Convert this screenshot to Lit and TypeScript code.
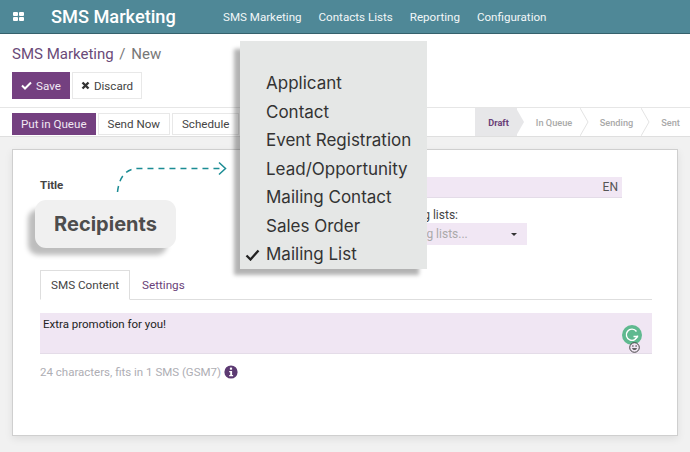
import { LitElement, html, css } from "lit";
import { customElement } from "lit/decorators.js";

@customElement("app-root")
export class AppRoot extends LitElement {
  static styles = css`
    :host { display: block; position: relative; width: 690px; height: 452px; overflow: hidden; background: #fff; font-family: Roboto, "Liberation Sans", sans-serif; color: #4c4c4c; font-size: 12px; }
    .nav { height: 33px; background: #4f8897; border-bottom: 1px solid #35616c; display: flex; align-items: center; color: #fff; box-sizing: content-box; }
    .apps { margin-left: 13px; width: 11px; height: 10px; display: grid; grid-template-columns: 5px 5px; grid-template-rows: 4px 4px; gap: 1px; align-content: center; }
    .apps i { background: #fff; border-radius: 1px; }
    .brand { margin-left: 27px; font-size: 18.2px; font-weight: 500; width: 172px; }
    .menu-items { display: flex; gap: 17px; font-size: 11.6px; color: #f2f7f8; }
    .panel { height: 74px; box-sizing: border-box; padding: 11px 12px 0; border-bottom: 1px solid #e6e6e6; }
    .crumbs { font-size: 15px; line-height: 18px; color: #6a4a78; }
    .crumbs span { color: #777; }
    .crumbs .sep { margin: 0 2px; }
    .actions { display: flex; gap: 2px; margin-top: 9px; }
    .btn { display: flex; align-items: center; justify-content: center; gap: 4px; box-sizing: border-box; font-size: 11.6px; border: 1px solid #e8e8e8; background: #fff; color: #444; }
    .primary { background: #744080; border-color: #744080; color: #f1e8f3; }
    .save { width: 58px; height: 27px; }
    .discard { width: 70px; height: 27px; }
    .status { height: 29px; box-sizing: border-box; display: flex; justify-content: space-between; align-items: center; padding-left: 12px; border-bottom: 1px solid #dfdfdf; }
    .left { display: flex; gap: 2px; padding-top: 3px; }
    .left .btn { height: 22px; padding: 0 8px; }
    .left .btn.plain { padding: 0 9px; }
    .left .btn.blank { width: 40px; }
    .steps { display: flex; height: 100%; font-size: 9.2px; font-weight: 500; color: #a9a9a9; width: 215px; }
    .step { position: relative; display: flex; align-items: center; justify-content: center; height: 100%; }
    .step svg { position: absolute; right: -8px; top: 0; width: 9px; height: 28px; z-index: 1; }
    .draft { width: 42px; background: #e7e7e9; color: #6a3f78; font-weight: 700; padding-left: 5px; box-sizing: border-box; }
    .queue { width: 64px; padding-left: 10px; box-sizing: border-box; }
    .sending { width: 61px; padding-left: 10px; box-sizing: border-box; }
    .sent { width: 48px; padding-left: 9px; box-sizing: border-box; }
    .content { height: 315px; box-sizing: border-box; padding: 12px 12px 0; background: #f1f1f1; }
    .sheet { height: 287px; box-sizing: border-box; background: #fff; border: 1px solid #cfcfcf; box-shadow: 0 3px 8px rgba(0,0,0,.08); padding: 27px 25px 0 27px; }
    .row { display: flex; align-items: center; height: 21px; }
    .title-label { width: 100px; font-weight: 700; font-size: 11.5px; color: #444; padding-bottom: 5px; }
    .title-input { margin-left: 200px; width: 282px; flex: none; height: 21px; box-sizing: border-box; background: #f1e7f4; border-bottom: 1px solid #e4dce8; display: flex; justify-content: flex-end; align-items: center; padding-right: 4px; color: #555; font-size: 12px; }
    .lists { margin-left: 280px; height: 46px; margin-top: 9px; width: 207px; }
    .lists .cap { display: block; height: 16px; line-height: 16px; font-size: 12px; text-align: right; padding-right: 69px; color: #444; }
    .select { height: 22px; background: #f1e7f4; color: #aaa; display: flex; align-items: center; justify-content: space-between; padding: 0 10px 0 38px; font-size: 12px; }
    .select i { width: 0; height: 0; border: 3px solid transparent; border-top: 3.5px solid #333; border-bottom: 0; }
    .tabs { display: flex; margin-top: 17px; height: 30px; box-sizing: border-box; border-bottom: 1px solid #dedede; }
    .tab { box-sizing: border-box; height: 30px; display: flex; align-items: center; padding: 0 12px; font-size: 11.7px; color: #6a3f78; }
    .tab.active { width: 90px; justify-content: center; padding: 0; background: #fff; color: #444; border: 1px solid #dedede; border-bottom: 1px solid #fff; }
    .area { position: relative; height: 41px; margin-top: 13px; box-sizing: border-box; background: #f0e6f3; border-bottom: 1px solid #e4dce8; padding: 4px 3px; font-size: 11.5px; color: #222; }
    .g { position: absolute; right: 10px; top: 12px; width: 20px; height: 20px; }
    .smile { position: absolute; right: 12px; top: 29px; width: 11px; height: 11px; }
    .hint { display: flex; align-items: center; gap: 3px; margin-top: 10px; height: 16px; font-size: 11.5px; color: #aeaeb4; }
    .hint svg { width: 14px; height: 14px; }
    .overlay { position: absolute; left: 240px; top: 41px; width: 187px; height: 228px; box-sizing: border-box; padding-top: 28px; background: #e5e7e6; box-shadow: -7px 7px 4px -1px rgba(0,0,0,.3); font-family: Inter, Roboto, sans-serif; font-size: 17px; color: #333; }
    .overlay div { height: 28.5px; line-height: 28.5px; padding-left: 26px; white-space: nowrap; position: relative; }
    .overlay svg { position: absolute; left: 5px; top: 9px; width: 15px; height: 12px; }
    .bubble { position: absolute; left: 35px; top: 200px; width: 141px; height: 48px; border-radius: 11px; background: #f0f0f0; box-shadow: -8px 8px 5px -1px rgba(0,0,0,.26); display: flex; align-items: center; justify-content: center; font-family: Inter, Roboto, sans-serif; font-size: 20px; font-weight: 700; color: #4d4d4d; }
    .arrow { position: absolute; left: 112px; top: 158px; width: 118px; height: 38px; }
  `;

  render() {
    return html`
      <div class="nav">
        <div class="apps"><i></i><i></i><i></i><i></i></div>
        <div class="brand">SMS Marketing</div>
        <div class="menu-items"><span>SMS Marketing</span><span>Contacts Lists</span><span>Reporting</span><span>Configuration</span></div>
      </div>
      <div class="panel">
        <div class="crumbs">SMS Marketing<span class="sep"> / </span><span>New</span></div>
        <div class="actions">
          <div class="btn primary save">
            <svg width="11" height="9" viewBox="0 0 11 9"><path d="M1 4.5 4 7.5 10 1.5" fill="none" stroke="#fff" stroke-width="2"/></svg>Save
          </div>
          <div class="btn discard">
            <svg width="9" height="9" viewBox="0 0 9 9"><path d="M1.5 1.5 7.5 7.5M7.5 1.5 1.5 7.5" fill="none" stroke="#333" stroke-width="2.4"/></svg>Discard
          </div>
        </div>
      </div>
      <div class="status">
        <div class="left">
          <div class="btn primary">Put in Queue</div>
          <div class="btn plain">Send Now</div>
          <div class="btn plain">Schedule</div>
          <div class="btn blank"></div>
        </div>
        <div class="steps">
          <div class="step draft">Draft<svg viewBox="0 0 9 28"><path d="M0 0 8 14 0 28Z" fill="#e7e7e9"/></svg></div>
          <div class="step queue">In Queue<svg viewBox="0 0 9 28"><path d="M0 0 8 14 0 28" fill="#fff" stroke="#e3e3e3"/></svg></div>
          <div class="step sending">Sending<svg viewBox="0 0 9 28"><path d="M0 0 8 14 0 28" fill="#fff" stroke="#e3e3e3"/></svg></div>
          <div class="step sent">Sent</div>
        </div>
      </div>
      <div class="content">
        <div class="sheet">
          <div class="row"><div class="title-label">Title</div><div class="title-input">EN</div></div>
          <div class="lists"><span class="cap">Mailing lists:</span><div class="select"><span>Select mailing lists...</span><i></i></div></div>
          <div class="tabs"><div class="tab active">SMS Content</div><div class="tab">Settings</div></div>
          <div class="area">Extra promotion for you!
            <svg class="g" viewBox="0 0 20 20"><circle cx="10" cy="10" r="10" fill="#5fb98f"/><path d="M14.500 6.500A5.600 5.600 0 1 0 15.500 10.500V11.500H11.500" fill="none" stroke="#fff" stroke-width="1.400"/><path d="M15.500 11.500 13 14" fill="none" stroke="#fff" stroke-width="1.100"/></svg>
            <svg class="smile" viewBox="0 0 11 11"><circle cx="5.5" cy="5.5" r="4.8" fill="#f0e6f3" stroke="#333" stroke-width=".9"/><path d="M3 6.2C4 8.4 7 8.4 8 6.2Z" fill="#333"/><circle cx="3.9" cy="4" r=".7" fill="#333"/><circle cx="7.1" cy="4" r=".7" fill="#333"/></svg>
          </div>
          <div class="hint">24 characters, fits in 1 SMS (GSM7)
            <svg viewBox="0 0 14 14"><circle cx="7" cy="7" r="6.6" fill="#5c3a72"/><rect x="5.9" y="2.6" width="2.2" height="2.1" fill="#fff"/><path d="M5.2 6h2.9v4h1v1.3H5.2V10h1V7.3h-1Z" fill="#fff"/></svg>
          </div>
        </div>
      </div>
      <svg class="arrow" viewBox="0 0 118 38"><path d="M5.500 34C7 21 12 11 26 10.500H112" fill="none" stroke="#1b8c94" stroke-width="1.500" stroke-dasharray="6 5"/><path d="M107 4.500 113.500 10.500 107 16.500" fill="none" stroke="#1b8c94" stroke-width="1.500"/></svg>
      <div class="bubble">Recipients</div>
      <div class="overlay">
        <div>Applicant</div><div>Contact</div><div>Event Registration</div><div>Lead/Opportunity</div><div>Mailing Contact</div><div>Sales Order</div>
        <div><svg viewBox="0 0 15 12"><path d="M1.500 6.500 5.500 10.500 13.500 1.500" fill="none" stroke="#222" stroke-width="2.300"/></svg>Mailing List</div>
      </div>
    `;
  }
}
